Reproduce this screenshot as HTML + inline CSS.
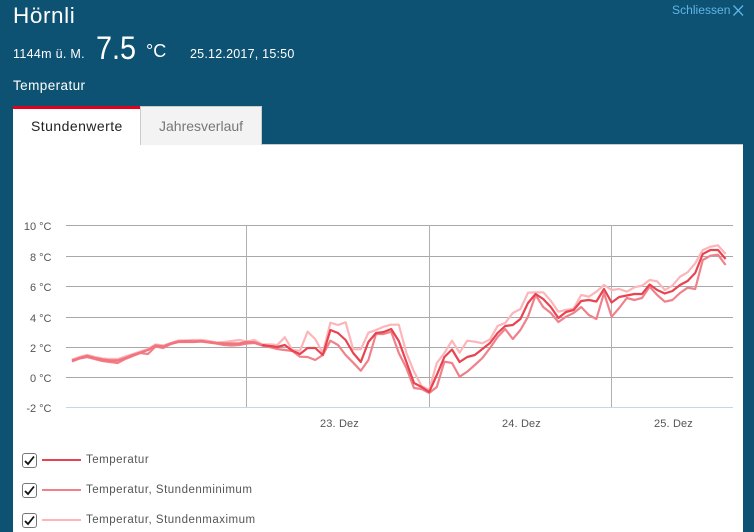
<!DOCTYPE html>
<html><head><meta charset="utf-8"><style>
html,body{margin:0;padding:0}
body{width:754px;height:532px;overflow:hidden;background:#0e5273;position:relative;font-family:"Liberation Sans",sans-serif;color:#fff}
.t{position:absolute;white-space:nowrap;line-height:1}
.cb{position:absolute;left:22px;width:13px;height:13px;border:1px solid #777;border-radius:3px;background:#fff}
.ll{position:absolute;left:42px;width:39px;height:2px}
.lb{position:absolute;left:86px;font-size:11.5px;color:#555;letter-spacing:.5px;white-space:nowrap;line-height:1}
</style></head><body>
<div class="t" style="left:13px;top:5px;font-size:22.5px;letter-spacing:.6px">Hörnli</div>
<div class="t" style="left:13px;top:48px;font-size:12.5px;letter-spacing:.3px">1144m ü. M.</div>
<div class="t" style="left:96px;top:32px;font-size:32px;transform:scaleX(.9);transform-origin:left top">7.5</div>
<div class="t" style="left:146px;top:42px;font-size:18px">°C</div>
<div class="t" style="left:190px;top:48px;font-size:12.5px;letter-spacing:.22px">25.12.2017, 15:50</div>
<div class="t" style="left:13px;top:79px;font-size:13.5px;letter-spacing:.42px">Temperatur</div>
<div class="t" style="left:672px;top:4px;font-size:12.1px;color:#5fb4e6">Schliessen</div>
<svg style="position:absolute;left:733px;top:5px" width="12" height="12"><path d="M.5 .5 L10 10.5 M10 .5 L.5 10.5" stroke="#5fb4e6" stroke-width="1.3" fill="none"/></svg>
<div style="position:absolute;left:13px;top:145px;width:730px;height:387px;background:#fff"></div>
<div style="position:absolute;left:140px;top:144px;width:603px;height:1px;background:#ccc"></div>
<div style="position:absolute;left:140px;top:106px;width:120px;height:38px;background:#f3f3f3;border:1px solid #ccc;border-bottom:0"></div>
<div style="position:absolute;left:13px;top:106px;width:127px;height:39px;background:#fff;border-top:3px solid #e2001a;box-sizing:border-box"></div>
<div class="t" style="left:31px;top:119px;font-size:14px;color:#222;letter-spacing:.45px">Stundenwerte</div>
<div class="t" style="left:159px;top:119px;font-size:14px;color:#777;letter-spacing:0">Jahresverlauf</div>
<svg style="position:absolute;left:0;top:0" width="754" height="532">
<g stroke="#a8a8a8" stroke-width="1" fill="none">
<path d="M66 225.5H733M66 256.5H733M66 286.5H733M66 317.5H733M66 347.5H733M66 377.5H733"/>
<path d="M246.5 225V407M429.5 225V407M611.5 225V407" stroke="#b0b0b0"/>
</g>
<path d="M66 407.5H733" stroke="#c5d6e8" fill="none"/>
<g fill="none" stroke-width="2.2" stroke-linejoin="round">
<polyline stroke="#f0808a" points="72,361.5 79.6,358.5 87.2,357 94.8,359 102.4,361 110,362 117.6,363 125.2,359 132.8,356 140.4,353 148,354 155.6,346.5 163.2,348 170.8,344 178.4,342 186,342 193.6,342 201.2,341.5 208.8,342.5 216.4,343.5 224,345 231.6,345.5 239.2,345 246.8,343.5 254.4,343 262,345.5 269.6,347 277.2,349 284.8,350 292.4,351 300,356.7 307.6,357 315.2,360 322.8,355 330.4,340.7 338,345 345.6,355 353.2,362.7 360.8,370.7 368.4,360 376,334 383.6,334 391.2,331.7 398.8,353 406.4,368 414,388 421.6,389 429.2,393 436.8,387 444.4,361.7 452,363 459.6,376.7 467.2,371.7 474.8,365 482.4,358 490,348 497.6,337 505.2,329 512.8,339 520.4,330 528,316.7 535.6,295 543.2,307 550.8,313 558.4,322 566,316.7 573.6,313 581.2,307 588.8,315 596.4,319 604,293 611.6,316.7 619.2,308 626.8,298 634.4,300 642,298 649.6,286.7 657.2,295 664.8,301.7 672.4,300 680,293 687.6,287.7 695.2,289 702.8,260 710.4,255.7 718,254.7 725.6,265"/>
<polyline stroke="#fdb5b9" points="72,359.5 79.6,357 87.2,355 94.8,357 102.4,358.5 110,359 117.6,359 125.2,356.5 132.8,354 140.4,351.5 148,349 155.6,344.5 163.2,345.5 170.8,343 178.4,340.5 186,340.5 193.6,340 201.2,340 208.8,341 216.4,342.5 224,342 231.6,341 239.2,340 246.8,341.5 254.4,340 262,344.3 269.6,344.3 277.2,345 284.8,337.3 292.4,350 300,350.7 307.6,331.7 315.2,339 322.8,353 330.4,322.7 338,325 345.6,322.3 353.2,349.3 360.8,349.3 368.4,332.7 376,330 383.6,326.7 391.2,324.7 398.8,324.7 406.4,353 414,371.7 421.6,386 429.2,390 436.8,363 444.4,353 452,340.7 459.6,352.7 467.2,340.7 474.8,341.7 482.4,343.3 490,339.3 497.6,326 505.2,323 512.8,313 520.4,309 528,292.7 535.6,292.3 543.2,292.3 550.8,300.7 558.4,311.7 566,310 573.6,308.7 581.2,295 588.8,296.7 596.4,291.7 604,285 611.6,290 619.2,289 626.8,291.7 634.4,287.3 642,285.7 649.6,280 657.2,281.3 664.8,290 672.4,285.7 680,276.7 687.6,272.3 695.2,263.3 702.8,250 710.4,246.7 718,245.3 725.6,254"/>
<polyline stroke="#e8434f" points="72,360.5 79.6,358 87.2,356 94.8,358 102.4,359.5 110,360.5 117.6,360.5 125.2,358 132.8,355 140.4,352.5 148,350 155.6,345.5 163.2,346.5 170.8,343.5 178.4,341.5 186,341 193.6,341.5 201.2,341 208.8,342 216.4,343 224,343.5 231.6,343.5 239.2,343.5 246.8,342 254.4,342.3 262,345 269.6,346 277.2,347 284.8,345 292.4,350.7 300,354 307.6,348 315.2,348 322.8,355 330.4,330 338,333 345.6,340 353.2,353 360.8,362 368.4,342 376,333 383.6,332 391.2,329 398.8,341 406.4,362 414,383 421.6,387 429.2,392 436.8,375 444.4,357 452,349.5 459.6,362 467.2,357 474.8,355 482.4,349 490,343 497.6,333 505.2,326 512.8,325 520.4,319 528,303 535.6,294 543.2,299 550.8,307 558.4,318 566,312 573.6,310 581.2,301 588.8,300 596.4,301.5 604,289 611.6,302.5 619.2,297 626.8,295.5 634.4,294 642,294 649.6,284.5 657.2,290 664.8,293.5 672.4,291 680,285 687.6,281 695.2,273 702.8,254 710.4,250 718,250 725.6,259"/>
<polyline stroke="#fba6ac" stroke-opacity=".5" points="72,360.5 79.6,358 87.2,356 94.8,358 102.4,359.5 110,360.5 117.6,360.5 125.2,358 132.8,355 140.4,352.5 148,350 155.6,345.5 163.2,346.5 170.8,343.5 178.4,341.5 186,341 193.6,341.5 201.2,341 208.8,342 216.4,343 224,343.5 231.6,343.5 239.2,343.5 246.8,342 254.4,342.3 262,345"/>
</g>
<g font-family="Liberation Sans,sans-serif" font-size="11" fill="#555" text-anchor="end">
<text x="51.5" y="230">10 °C</text><text x="51.5" y="261">8 °C</text><text x="51.5" y="291">6 °C</text><text x="51.5" y="322">4 °C</text><text x="51.5" y="352">2 °C</text><text x="51.5" y="382">0 °C</text><text x="51.5" y="412">-2 °C</text>
</g>
<g font-family="Liberation Sans,sans-serif" font-size="11" fill="#555" letter-spacing=".15">
<text x="320" y="427">23. Dez</text><text x="502" y="427">24. Dez</text><text x="654" y="427">25. Dez</text>
</g>
</svg>
<div class="cb" style="top:453px"></div><div class="cb" style="top:483px"></div><div class="cb" style="top:513px"></div>
<svg style="position:absolute;left:0;top:0" width="60" height="532"><g fill="none" stroke="#111" stroke-width="1.8"><path d="M25 461l3 3 6-7.5"/><path d="M25 491l3 3 6-7.5"/><path d="M25 521l3 3 6-7.5"/></g></svg>
<div class="ll" style="top:459px;background:#e8434f"></div>
<div class="ll" style="top:489px;background:#f0808a"></div>
<div class="ll" style="top:519px;background:#fdb5b9"></div>
<div class="lb" style="top:455px">Temperatur</div>
<div class="lb" style="top:485px">Temperatur, Stundenminimum</div>
<div class="lb" style="top:515px">Temperatur, Stundenmaximum</div>
</body></html>
